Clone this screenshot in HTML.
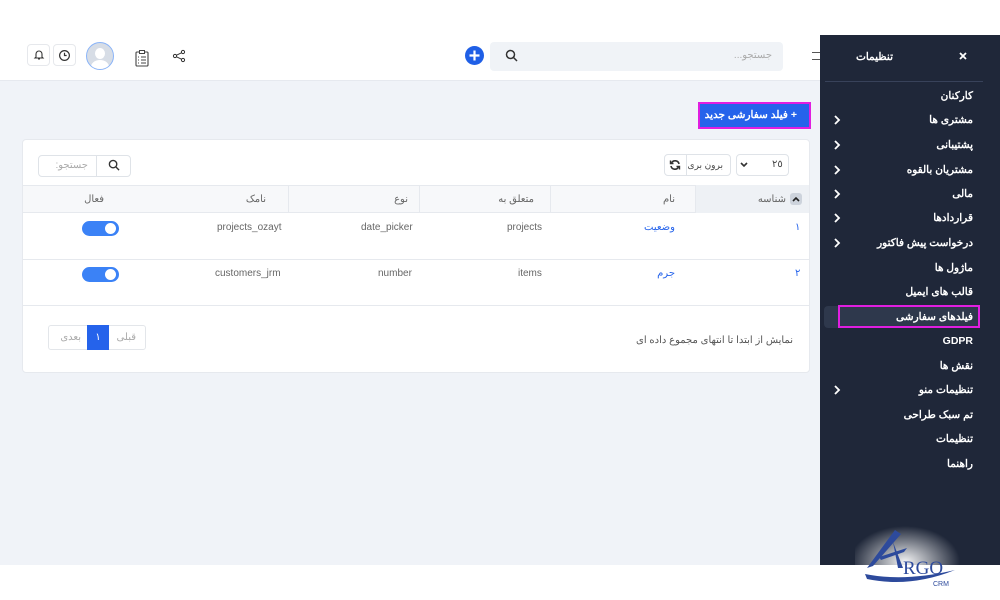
<!DOCTYPE html>
<html><head><meta charset="utf-8"><style>
*{box-sizing:border-box;margin:0;padding:0}
body{width:1000px;height:600px;position:relative;overflow:hidden;background:#fff;font-family:"Liberation Sans","Noto Sans CJK SC",sans-serif;font-size:10px;color:#555}
.a{position:absolute}
.t{white-space:nowrap;direction:rtl}
.side .t{color:#fff;font-weight:bold;font-size:10.5px;right:27px}
.gl{color:#666;font-size:10px}
</style></head><body>
<div class="a" style="left:0;top:35px;width:820px;height:46px;background:#fff;border-bottom:1px solid #e6e9ef"></div>
<div class="a" style="left:0;top:81px;width:820px;height:484px;background:#f0f3f8"></div>
<div class="a" style="left:27px;top:44px;width:23px;height:22px;border:1px solid #e6e8ec;border-radius:4px"></div>
<svg class="a" style="left:33px;top:49px" width="12" height="12" viewBox="0 0 12 12"><path d="M3 8V5a3 3 0 016 0v3l1 1H2z M5 10h2" fill="none" stroke="#333" stroke-width="1.1"/></svg>
<div class="a" style="left:53px;top:44px;width:23px;height:22px;border:1px solid #e6e8ec;border-radius:4px"></div>
<svg class="a" style="left:58px;top:49px" width="13" height="13" viewBox="0 0 12 12"><circle cx="6" cy="6" r="4.5" fill="none" stroke="#333" stroke-width="1.1"/><path d="M6 3.5V6h2" fill="none" stroke="#333" stroke-width="1.1"/></svg>
<div class="a" style="left:86px;top:42px;width:28px;height:28px;border-radius:50%;border:1.5px solid #8ab4f8;background:#d7dde6;overflow:hidden"><div class="a" style="left:8px;top:5px;width:10px;height:11px;border-radius:50%;background:#fff"></div><div class="a" style="left:4px;top:17px;width:18px;height:14px;border-radius:50%;background:#fff"></div></div>
<svg class="a" style="left:134px;top:49px" width="16" height="18" viewBox="0 0 16 18"><rect x="2" y="3" width="12" height="14" rx="1" fill="none" stroke="#444" stroke-width="1.1"/><rect x="5.5" y="1.5" width="5" height="3" fill="#fff" stroke="#444"/><path d="M4 8h1M7 8h5M4 11h1M7 11h5M4 14h1M7 14h5" stroke="#444"/></svg>
<svg class="a" style="left:172px;top:49px" width="14" height="14" viewBox="0 0 14 14"><circle cx="11" cy="3" r="1.6" fill="none" stroke="#333"/><circle cx="3" cy="7" r="1.6" fill="none" stroke="#333"/><circle cx="11" cy="11" r="1.6" fill="none" stroke="#333"/><path d="M4.5 6.2L9.5 3.8M4.5 7.8L9.5 10.2" stroke="#333"/></svg>
<svg class="a" style="left:465px;top:46px" width="19" height="19" viewBox="0 0 19 19"><circle cx="9.5" cy="9.5" r="9.5" fill="#1f5fe6"/><path d="M9.5 4.5v10M4.5 9.5h10" stroke="#fff" stroke-width="2.2"/></svg>
<div class="a" style="left:490px;top:42px;width:293px;height:29px;border-radius:4px;background:#f0f3f7"></div>
<svg class="a" style="left:505px;top:49px" width="13" height="13" viewBox="0 0 13 13"><circle cx="5.5" cy="5.5" r="4" fill="none" stroke="#333" stroke-width="1.5"/><path d="M8.5 8.5L12 12" stroke="#333" stroke-width="1.5"/></svg>
<div class="a t" style="right:228px;top:50px;color:#aaa">جستجو...</div>
<div class="a" style="left:812px;top:52px;width:8px;height:8px;border-top:1px solid #555;border-bottom:1px solid #555"></div>
<div class="a" style="left:698px;top:102px;width:113px;height:27px;border:2px solid #e01ee0;background:#2563eb"></div>
<div class="a t" style="right:203px;top:109px;color:#fff;font-weight:bold;font-size:10.5px">+ فیلد سفارشی جدید</div>
<div class="a" style="left:22px;top:139px;width:788px;height:234px;background:#fff;border-radius:4px;border:1px solid #e6e9ee"></div>
<div class="a" style="left:38px;top:155px;width:93px;height:22px;border:1px solid #dfe3e8;border-radius:4px"></div>
<div class="a" style="left:96px;top:155px;width:1px;height:22px;background:#dfe3e8"></div>
<svg class="a" style="left:108px;top:159px" width="12" height="12" viewBox="0 0 13 13"><circle cx="5.5" cy="5.5" r="4" fill="none" stroke="#333" stroke-width="1.5"/><path d="M8.5 8.5L12 12" stroke="#333" stroke-width="1.5"/></svg>
<div class="a t" style="right:912px;top:160px;color:#aaa">جستجو:</div>
<div class="a" style="left:664px;top:154px;width:67px;height:22px;border:1px solid #dfe3e8;border-radius:4px"></div>
<div class="a" style="left:686px;top:154px;width:1px;height:22px;background:#dfe3e8"></div>
<svg class="a" style="left:669px;top:159px" width="12" height="12" viewBox="0 0 12 12"><path d="M10 5A4 4 0 0 0 2.5 4M2 7a4 4 0 0 0 7.5 1" fill="none" stroke="#333" stroke-width="1.6"/><path d="M1.5 1.5v3h3M10.5 10.5v-3h-3" fill="none" stroke="#333" stroke-width="1.4"/></svg>
<div class="a t" style="right:277px;top:160px;color:#444;font-size:9px">برون بری</div>
<div class="a" style="left:736px;top:154px;width:53px;height:22px;border:1px solid #dfe3e8;border-radius:4px"></div>
<svg class="a" style="left:740px;top:162px" width="8" height="6" viewBox="0 0 8 6"><path d="M1 1l3 3 3-3" fill="none" stroke="#333" stroke-width="1.6"/></svg>
<div class="a" style="left:772px;top:159px;color:#444">٢٥</div>
<div class="a" style="left:23px;top:185px;width:786px;height:28px;background:#f7f8fa;border-top:1px solid #e6e9ee;border-bottom:1px solid #e6e9ee"></div>
<div class="a" style="left:695px;top:185px;width:114px;height:28px;background:#eef1f5"></div>
<div class="a" style="left:288px;top:185px;width:1px;height:28px;background:#e6e9ee"></div>
<div class="a" style="left:419px;top:185px;width:1px;height:28px;background:#e6e9ee"></div>
<div class="a" style="left:550px;top:185px;width:1px;height:28px;background:#e6e9ee"></div>
<div class="a" style="left:695px;top:185px;width:1px;height:28px;background:#e6e9ee"></div>
<div class="a" style="left:790px;top:193px;width:12px;height:12px;border-radius:3px;background:#cdd3dc"></div>
<svg class="a" style="left:792px;top:196px" width="8" height="6" viewBox="0 0 8 6"><path d="M1 5l3-3 3 3" fill="none" stroke="#222" stroke-width="1.6"/></svg>
<div class="a t gl" style="right:214px;top:194px">شناسه</div>
<div class="a t gl" style="right:325px;top:194px">نام</div>
<div class="a t gl" style="right:466px;top:194px">متعلق به</div>
<div class="a t gl" style="right:592px;top:194px">نوع</div>
<div class="a t gl" style="right:734px;top:194px">نامک</div>
<div class="a t gl" style="right:896px;top:194px">فعال</div>
<div class="a" style="left:23px;top:259px;width:786px;height:1px;background:#e6e9ee"></div>
<div class="a" style="left:23px;top:305px;width:786px;height:1px;background:#e6e9ee"></div>
<div class="a" style="left:795px;top:222px;color:#2563eb">١</div>
<div class="a t" style="right:325px;top:222px;color:#2563eb">وضعیت</div>
<div class="a" style="left:507px;top:222px;color:#666">projects</div>
<div class="a" style="left:361px;top:222px;color:#666">date_picker</div>
<div class="a" style="left:217px;top:222px;color:#666">projects_ozayt</div>
<div class="a" style="left:82px;top:221px;width:37px;height:15px;border-radius:8px;background:#3b82f6"><div class="a" style="left:23px;top:2px;width:11px;height:11px;border-radius:50%;background:#fff"></div></div>
<div class="a" style="left:795px;top:268px;color:#2563eb">٢</div>
<div class="a t" style="right:325px;top:268px;color:#2563eb">جرم</div>
<div class="a" style="left:518px;top:268px;color:#666">items</div>
<div class="a" style="left:378px;top:268px;color:#666">number</div>
<div class="a" style="left:215px;top:268px;color:#666">customers_jrm</div>
<div class="a" style="left:82px;top:267px;width:37px;height:15px;border-radius:8px;background:#3b82f6"><div class="a" style="left:23px;top:2px;width:11px;height:11px;border-radius:50%;background:#fff"></div></div>
<div class="a t" style="right:207px;top:335px;color:#555">نمایش از ابتدا تا انتهای مجموع داده ای</div>
<div class="a" style="left:48px;top:325px;width:98px;height:25px;border:1px solid #e3e6ea;border-radius:3px"></div>
<div class="a" style="left:87px;top:325px;width:22px;height:25px;background:#2563eb;color:#fff;text-align:center;line-height:25px">١</div>
<div class="a t" style="right:864px;top:332px;color:#aaa">قبلی</div>
<div class="a t" style="right:919px;top:332px;color:#aaa">بعدی</div>
<div class="a side" style="left:820px;top:35px;width:180px;height:530px;background:#1f2739">
<svg class="a" style="left:139px;top:17px" width="8" height="8" viewBox="0 0 8 8"><path d="M1 1l6 6M7 1L1 7" stroke="#fff" stroke-width="1.8"/></svg>
<div class="a t" style="right:107px;top:16px;color:#fff;font-weight:bold;font-size:10.5px">تنظیمات</div>
<div class="a" style="left:5px;top:46px;width:158px;height:1px;background:#38425a"></div>
<div class="a t" style="top:55px">کارکنان</div>
<div class="a t" style="top:79px">مشتری ها</div>
<div class="a t" style="top:104px">پشتیبانی</div>
<div class="a t" style="top:129px">مشتریان بالقوه</div>
<div class="a t" style="top:153px">مالی</div>
<div class="a t" style="top:177px">قراردادها</div>
<div class="a t" style="top:202px">درخواست پیش فاکتور</div>
<div class="a t" style="top:227px">ماژول ها</div>
<div class="a t" style="top:251px">قالب های ایمیل</div>
<div class="a" style="left:4px;top:271px;width:156px;height:22px;background:#2e384c;border-radius:4px"></div>
<div class="a" style="left:18px;top:270px;width:142px;height:23px;border:2px solid #e01ee0"></div>
<div class="a t" style="top:276px">فیلدهای سفارشی</div>
<div class="a t" style="top:300px">GDPR</div>
<div class="a t" style="top:325px">نقش ها</div>
<div class="a t" style="top:349px">تنظیمات منو</div>
<div class="a t" style="top:374px">تم سبک طراحی</div>
<div class="a t" style="top:398px">تنظیمات</div>
<div class="a t" style="top:423px">راهنما</div>
<svg class="a" style="left:13px;top:80px" width="8" height="300" viewBox="0 0 8 300">
<g fill="none" stroke="#fff" stroke-width="1.8">
<path d="M2 1l4 4-4 4"/><path d="M2 26l4 4-4 4"/><path d="M2 51l4 4-4 4"/><path d="M2 75l4 4-4 4"/><path d="M2 99l4 4-4 4"/><path d="M2 124l4 4-4 4"/><path d="M2 271l4 4-4 4"/>
</g></svg>
</div>
<svg class="a" style="left:855px;top:520px" width="130" height="80" viewBox="0 0 130 80">
<defs><radialGradient id="g"><stop offset="0" stop-color="#fff" stop-opacity=".95"/><stop offset="1" stop-color="#fff" stop-opacity="0"/></radialGradient></defs>
<ellipse cx="50" cy="42" rx="55" ry="36" fill="url(#g)"/>
<path d="M12 48 L40 10 L46 14 L18 46 Z" fill="#2d4a9c"/>
<path d="M24 37 L52 28 L49 32 L26 40Z" fill="#2d4a9c"/>
<path d="M38 22 L48 48 L43 48Z" fill="#2d4a9c"/>
<path d="M10 54 Q50 62 100 50 Q55 68 12 59Z" fill="#2d4a9c"/>
<text x="48" y="54" font-family="Liberation Serif,serif" font-size="19" fill="#2d4a9c">RGO</text>
<text x="78" y="66" font-family="Liberation Sans,sans-serif" font-size="7" fill="#2d4a9c">CRM</text>
</svg>
</body></html>
